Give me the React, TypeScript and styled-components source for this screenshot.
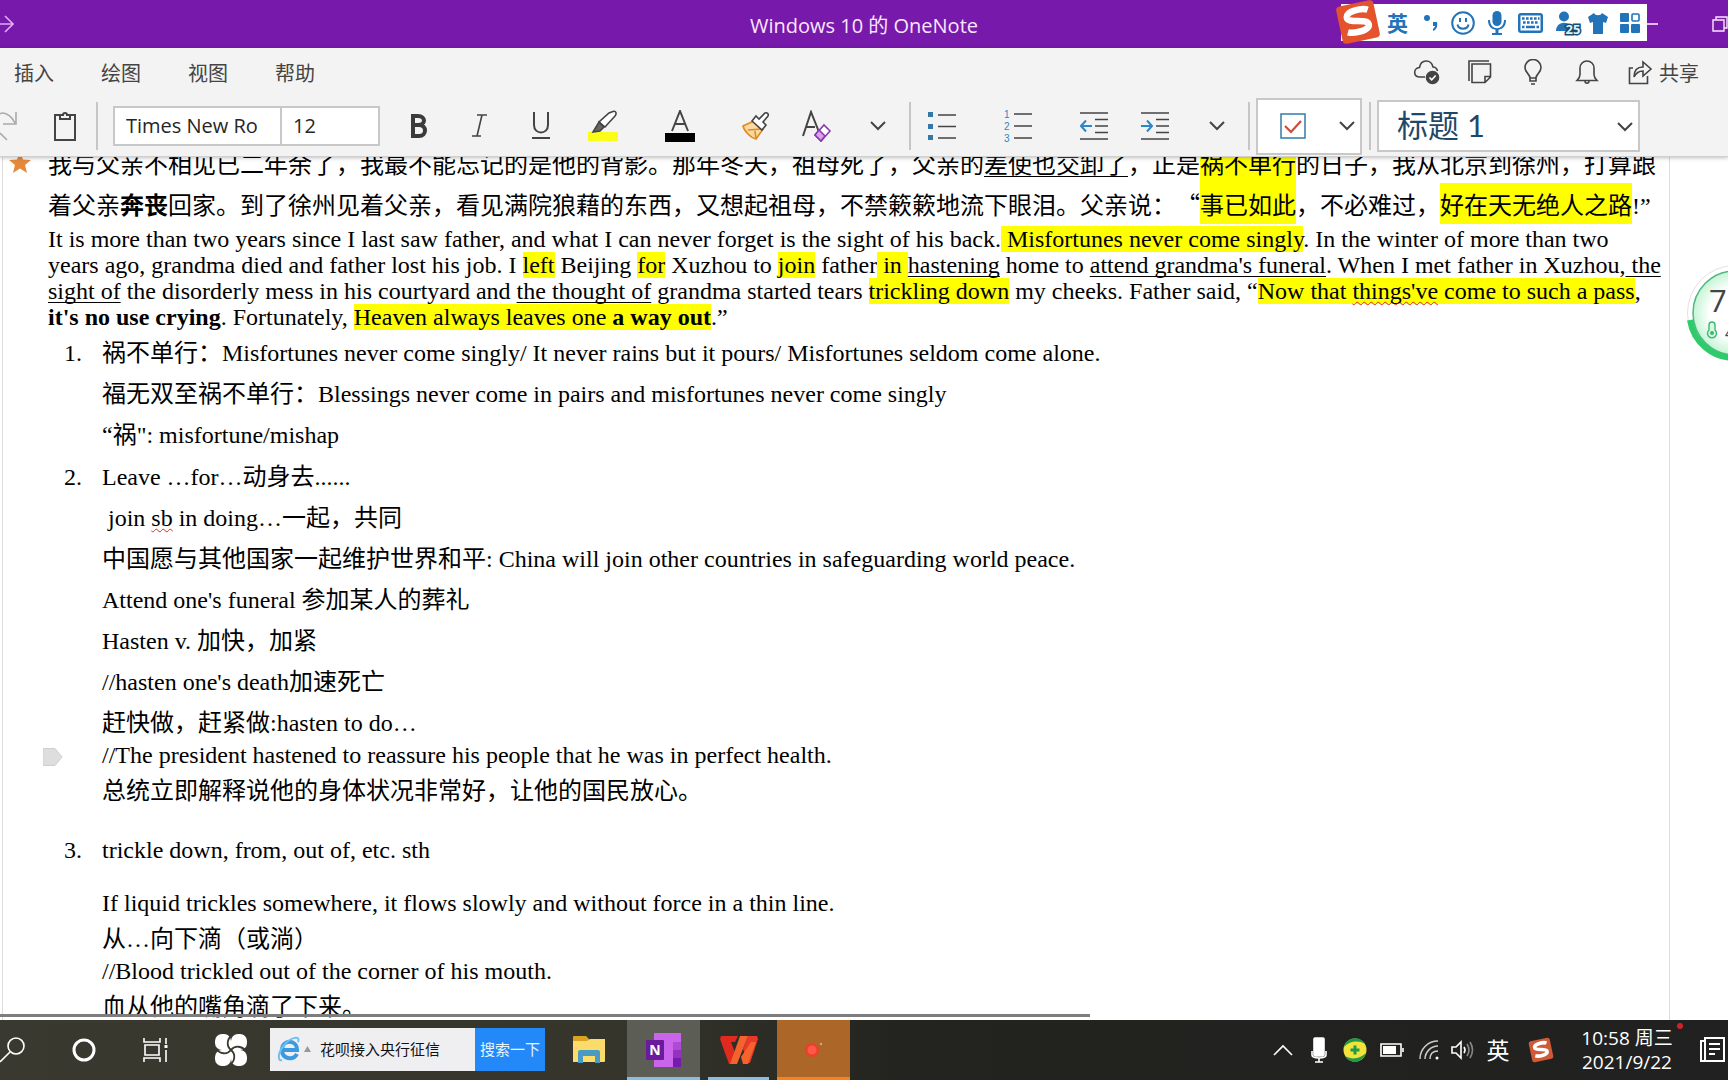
import React from 'react';
import styled, { createGlobalStyle, css } from 'styled-components';

const ui = '"Open Sans", "Noto Sans CJK SC", sans-serif';
const serif = '"Liberation Serif", "Noto Sans CJK SC", serif';
const cjk = '"Noto Sans CJK SC", sans-serif';

const Global = createGlobalStyle`
  * { box-sizing: border-box; }
  body { margin: 0; background: #fff; overflow: hidden; }
  button, input, select { font: inherit; color: inherit; margin: 0; }
  svg { display: block; flex: none; }
`;

const Screen = styled.div`
  display: flex;
  flex-direction: column;
  height: 100vh;
  font-family: ${ui};
  color: #444;
`;

/* ---------- title bar ---------- */
const TitleBar = styled.header`
  position: relative;
  flex: none;
  display: flex;
  align-items: center;
  height: 48px;
  background: #7719aa;
  color: #fbe6ff;
`;
const PlainButton = styled.button`
  display: inline-flex;
  align-items: center;
  justify-content: center;
  padding: 0;
  border: 0;
  background: none;
`;
const Forward = styled(PlainButton)`
  width: 14px;
  height: 48px;
`;
const Title = styled.h1`
  flex: 1;
  margin: 0 14px 0 0;
  text-align: center;
  font-size: 20px;
  font-weight: 400;
`;
const WindowButtons = styled.div`
  position: absolute;
  right: 0;
  top: 0;
  display: flex;
  justify-content: space-between;
  width: 81px;
  height: 48px;
`;
const ImeBar = styled.div`
  position: absolute;
  z-index: 2;
  right: 81px;
  top: 4px;
  display: flex;
  align-items: center;
  justify-content: space-between;
  width: 306px;
  height: 37px;
  padding: 0 7px 0 46px;
  background: #fff;
  color: #2373b9;
  font-size: 21px;
  font-weight: 700;
  line-height: 30px;
`;
const ImeLogo = styled.div`
  position: absolute;
  left: -6px;
  top: -5px;
`;
const Account = styled.svg`
  overflow: visible;
`;

/* ---------- menu row ---------- */
const Ribbon = styled.div`
  position: relative;
  z-index: 1;
  flex: none;
  background: #f3f3f3;
  border-bottom: 1px solid #d0d0d0;
  box-shadow: 0 1px 4px rgba(0, 0, 0, 0.25);
`;
const MenuRow = styled.nav`
  display: flex;
  align-items: center;
  justify-content: space-between;
  height: 48px;
  padding: 0 29px 0 14px;
  font-size: 20px;
`;
const Group = styled.div<{ $gap: number }>`
  display: flex;
  align-items: center;
  gap: ${p => p.$gap}px;
`;
const MenuButton = styled(PlainButton)`
  gap: 6px;
  white-space: nowrap;
`;

/* ---------- tool row ---------- */
const ToolRow = styled.div`
  display: flex;
  align-items: center;
  height: 60px;
`;
const Tool = styled(PlainButton)<{ $w: number }>`
  width: ${p => p.$w}px;
  height: 48px;
  flex: none;
`;
const Divider = styled.span`
  flex: none;
  width: 2px;
  height: 48px;
  background: #c6c6c6;
`;
const FontBox = styled.div`
  display: flex;
  flex: none;
  width: 267px;
  height: 40px;
  margin: 0 8px 0 15px;
  border: 2px solid #c8c8c8;
  background: #fff;
  color: #262626;
  font-size: 20px;
`;
const FontInput = styled.input<{ $w: number }>`
  width: ${p => p.$w}px;
  height: 36px;
  padding: 0 11px 2px;
  border: 0;
  outline: 0;
  background: none;
  & + & { border-left: 2px solid #c8c8c8; }
`;
const TagBox = styled.div`
  display: flex;
  align-items: center;
  justify-content: space-between;
  flex: none;
  width: 106px;
  height: 57px;
  margin: 0 7px 0 6px;
  padding: 0 4px 0 22px;
  border: 2px solid #c8c8c8;
  background: #fff;
`;
const StyleBox = styled.div`
  position: relative;
  flex: none;
  width: 263px;
  height: 52px;
  margin-left: 6px;
  border: 2px solid #c8c8c8;
  background: #fff;
  svg { position: absolute; right: 4px; top: 19px; pointer-events: none; }
`;
const StyleSelect = styled.select`
  appearance: none;
  width: 100%;
  height: 48px;
  padding: 0 18px 2px;
  border: 0;
  background: none;
  color: #1f4868;
  font-family: Lato, "Noto Sans CJK SC", sans-serif;
  font-size: 31px;
`;

/* ---------- page ---------- */
const Canvas = styled.main`
  position: relative;
  flex: 1;
  min-height: 0;
  overflow: hidden;
  background: #fff;
`;
const Sheet = styled.article`
  display: flow-root;
  height: 100%;
  margin: 0 58px 0 2px;
  border: solid #dcdcdc;
  border-width: 0 1px;
`;
const Body = styled.div`
  margin-top: -15px;
  padding-left: 45px;
  font-family: ${serif};
  font-size: 24px;
  color: #000;
  white-space: nowrap;
`;
const han = css`
  padding: 0;
  line-height: 41px;
`;
const latin = css`
  padding-bottom: 5px;
  line-height: 22px;
`;
const Chinese = styled.p`
  margin: 0;
  font-family: ${cjk};
  line-height: 41px;
  text-spacing-trim: space-all;
`;
const English = styled.p`
  margin: -1px 0 0;
  line-height: 26px;
`;
const Note = styled.p<{ $han?: boolean; $top?: number }>`
  margin: ${p => p.$top || 0}px 0 0;
  ${p => (p.$han ? han : latin)}
`;
const Serif = styled.span`
  font-family: ${serif};
`;
const Mark = styled.mark<{ $tall?: boolean }>`
  background: #ff0;
  color: inherit;
  padding: ${p => (p.$tall ? '3px 0' : '0')};
`;
const U = styled.u`
  text-underline-offset: 3px;
  text-decoration-thickness: 1px;
  text-decoration-skip-ink: none;
`;
const Typo = styled.span`
  text-decoration: underline wavy #d03010 1px;
  text-underline-offset: 2px;
  text-decoration-skip-ink: none;
`;
const Notes = styled.ol`
  margin: 0;
  padding: 0;
  list-style: none;
`;
const Item = styled.li<{ $top: number }>`
  display: grid;
  grid-template-columns: 54px 1fr;
  margin-top: ${p => p.$top}px;
`;
const Num = styled.span<{ $han?: boolean }>`
  margin-left: 16px;
  ${p => (p.$han ? han : latin)}
`;
const Flagged = styled.div`
  position: relative;
`;
const LineHandle = styled.span`
  position: absolute;
  left: -59px;
  top: 4px;
`;
const StarTag = styled.span`
  position: absolute;
  left: 9px;
  top: -5px;
`;
const ScrollThumb = styled.div`
  position: absolute;
  left: 0;
  bottom: 3px;
  width: 63.1%;
  height: 3px;
  background: #7d7d7d;
`;
const Ball = styled.aside`
  position: absolute;
  right: -55px;
  top: 108px;
  width: 96px;
  height: 96px;
`;

/* ---------- taskbar ---------- */
const TaskBar = styled.footer`
  flex: none;
  display: flex;
  justify-content: space-between;
  height: 60px;
  background: linear-gradient(90deg, #3a392f 0, #35352c 36%, #23241f 52%, #202120 100%);
  color: #fff;
`;
const Side = styled.div`
  display: flex;
  align-items: center;
`;
const Task = styled(PlainButton)<{ $w: number; $bg?: string; $line?: string }>`
  width: ${p => p.$w}px;
  height: 60px;
  flex: none;
  background: ${p => p.$bg || 'none'};
  border-bottom: 3px solid ${p => p.$line || 'transparent'};
  border-top: 3px solid transparent;
  background-clip: border-box;
`;
const OpenTask = styled(Task)`
  width: 61px;
  margin: 0 8px;
`;
const SearchForm = styled.form`
  display: flex;
  align-items: center;
  width: 275px;
  height: 43px;
  margin: 0 5px 2px 0;
  padding-left: 7px;
  background: #efeff1;
  font-size: 15px;
`;
const SearchInput = styled.input`
  flex: 1;
  min-width: 0;
  padding: 0 0 2px 7px;
  border: 0;
  background: none;
  color: #111;
`;
const SearchButton = styled.button`
  width: 70px;
  height: 43px;
  padding: 0 0 2px;
  border: 0;
  background: #2388f8;
  color: #e8f6ff;
`;
const ImeMode = styled(PlainButton)`
  width: 42px;
  padding: 0 4px 2px 0;
  font-size: 23px;
`;
const Clock = styled.time`
  position: relative;
  width: 136px;
  padding-right: 4px;
  text-align: center;
  font-size: 19px;
  line-height: 24px;
`;
const RedDot = styled.span`
  position: absolute;
  right: 14px;
  top: -3px;
  width: 6px;
  height: 6px;
  border-radius: 50%;
  background: #d0202c;
`;

const line = { fill: 'none', stroke: 'currentColor', strokeWidth: 1.6 };

const Chevron = () => (
  <svg width="18" height="12" viewBox="0 0 18 12" {...line} strokeWidth={2}><path d="M2 2l7 7 7-7" /></svg>
);
const SogouLogo = ({ size, tint }: { size: number; tint: string }) => (
  <svg width={size} height={size} viewBox="0 0 46 46">
    <g transform="rotate(-12 23 23)">
      <rect x="4" y="4" width="38" height="38" rx="4" fill={tint} />
      <path d="M35 13C30 10 14 10 13 16c-1 7 19 5 20 11 1 7-16 7-22 4" fill="none" stroke="#fff" strokeWidth="6.500" />
    </g>
  </svg>
);
const Indent = ({ out }: { out?: boolean }) => (
  <svg width="28" height="30" viewBox="0 0 28 30" {...line}>
    <path d="M0 2h28M15 8.500h13M15 15h13M15 21.500h13M0 28h28" />
    <path stroke="#2b88c8" strokeWidth="2" d={out ? 'M12 15H1M6 9.500L1 15l5 5.500' : 'M0 15h11M6 9.500l5 5.500-5 5.500'} />
  </svg>
);

export default function App() {
  return (
    <Screen>
      <Global />
      <TitleBar>
        <Forward aria-label="前进">
          <svg width="14" height="20" viewBox="0 0 14 20" fill="none" stroke="#e3a9f7" strokeWidth="1.6"><path d="M0 10h13M5 2l8 8-8 8" /></svg>
        </Forward>
        <Title>Windows 10 的 OneNote</Title>
        <ImeBar>
          <ImeLogo><SogouLogo size={46} tint="#e4532c" /></ImeLogo>
          <span>英</span>
          <svg width="20" height="22" viewBox="0 0 20 22" fill="currentColor"><circle cx="7" cy="6" r="3" /><path d="M13 10h4c1 5-1 8-4 9v-2c1-1 2-2 2-3h-2z" /></svg>
          <svg width="24" height="24" viewBox="0 0 24 24" fill="none" stroke="currentColor" strokeWidth="2"><circle cx="12" cy="12" r="10.800" /><path d="M6.500 13.500c1 5.500 10 5.500 11 0M9 7v4M15 7v4" /></svg>
          <svg width="20" height="26" viewBox="0 0 20 26" fill="currentColor"><rect x="5.500" y="1" width="9" height="15" rx="4.500" /><path d="M1 10h2c0 11 14 11 14 0h2c0 6-3 9-7.500 9.700V23H15v2H5v-2h3.500v-3.300C4 19 1 16 1 10z" /></svg>
          <svg width="25" height="20" viewBox="0 0 25 20"><rect width="25" height="20" rx="3" fill="currentColor" /><rect x="2.500" y="2.500" width="20" height="15" fill="#fff" /><path fill="none" stroke="currentColor" strokeWidth="2.400" strokeDasharray="2.600 1.400" d="M4 5.500h17.500M5 9.500h16" /><path fill="none" stroke="currentColor" strokeWidth="2.400" d="M4 14h2.500M8 14h9M18.500 14H21" /></svg>
          <Account width="22" height="24" viewBox="0 0 22 24">
            <circle cx="9" cy="5.500" r="5" fill="currentColor" /><path d="M1 20c0-11 16-11 17 0z" fill="currentColor" />
            <text x="18" y="23" fontSize="13" fontWeight="700" fill="#d8f4ff" stroke="#1a4a72" strokeWidth="3" paintOrder="stroke" textAnchor="middle">25</text>
          </Account>
          <svg width="20" height="22" viewBox="0 0 20 22" fill="currentColor"><path d="M6 1c1 3 7 3 8 0l6 4-2 6-3-1v12H5V10l-3 1-2-6z" /></svg>
          <svg width="20" height="20" viewBox="0 0 20 20" fill="currentColor"><rect width="9" height="9" rx="1" /><rect y="11" width="9" height="9" rx="1" /><rect x="11" y="11" width="9" height="9" rx="1" /><rect x="12" y="1" width="7" height="7" rx="1" fill="none" stroke="currentColor" strokeWidth="1.600" /></svg>
        </ImeBar>
        <WindowButtons>
          <PlainButton aria-label="最小化"><svg width="12" height="20" viewBox="0 0 12 20" {...line}><path d="M0 10h11" /></svg></PlainButton>
          <PlainButton aria-label="还原"><svg width="16" height="18" viewBox="0 0 16 18" {...line} strokeWidth={1.400}><path d="M1 5h11v11H1zM4 5V2h11v11h-3" /></svg></PlainButton>
        </WindowButtons>
      </TitleBar>

      <Ribbon>
        <MenuRow>
          <Group $gap={47}>
            <MenuButton>插入</MenuButton>
            <MenuButton>绘图</MenuButton>
            <MenuButton>视图</MenuButton>
            <MenuButton>帮助</MenuButton>
          </Group>
          <Group $gap={28}>
            <PlainButton aria-label="同步"><svg width="27" height="26" viewBox="0 0 27 26" {...line}><path d="M12 18H7c-7 0-7-9-.500-9.500C8 0 18 0 20 8c3 0 4 2 4.500 4" /><circle cx="19.500" cy="18.500" r="6" fill="#444" /><path stroke="#fff" d="M16.500 18.500l2.200 2.300 4-4.300" /></svg></PlainButton>
            <PlainButton aria-label="便笺"><svg width="24" height="24" viewBox="0 0 24 24" {...line}><path d="M1 21V1h20M4 4h18.500v13L17 22.500H4zM22.500 16.500H17v6" /></svg></PlainButton>
            <PlainButton aria-label="提示"><svg width="26" height="26" viewBox="0 0 26 26" {...line}><path d="M10 19c0-4-5-5-5-10.500a8 8 0 0 1 16 0C21 14 16 15 16 19zM10 19v3h6v-3M11 25h4" /></svg></PlainButton>
            <PlainButton aria-label="通知"><svg width="26" height="26" viewBox="0 0 26 26" {...line}><path d="M3 21.500c2-2 3-3 3-6V9a7 7 0 0 1 14 0v6.500c0 3 1 4 3 6zM11 22c0 3 4 3 4 0" /></svg></PlainButton>
            <MenuButton><svg width="25" height="26" viewBox="0 0 25 26" {...line}><path d="M5 9H1.500v15.500h18V17M6 18C6 11 9 8 15 8V3l8 7-8 7v-5c-4 0-7 2-9 6z" /></svg>共享</MenuButton>
          </Group>
        </MenuRow>
        <ToolRow>
          <Tool $w={34} aria-label="重做"><svg width="34" height="34" viewBox="0 0 34 34" fill="none" stroke="#aaa" strokeWidth="1.600"><path d="M16 3v12H3M15 14C10 4 2 3 0 5M0 24l7 7" /></svg></Tool>
          <Tool $w={62} aria-label="粘贴"><svg width="24" height="30" viewBox="0 0 24 30" {...line} strokeWidth={2}><path d="M7 4H2v25h20V4h-5M7 4v4h10V4h-3a2 2 0 0 0-4 0z" /></svg></Tool>
          <Divider />
          <FontBox>
            <FontInput $w={165} aria-label="字体" defaultValue="Times New Ro" />
            <FontInput $w={98} aria-label="字号" defaultValue="12" />
          </FontBox>
          <Tool $w={62} aria-label="加粗"><svg width="18" height="24" viewBox="0 0 18 24" fill="none" stroke="#3b3b3b" strokeWidth="4"><path d="M3 2h5c8 0 8 9 0 9H3h6c8 0 8 11 0 11H3zV22" /></svg></Tool>
          <Tool $w={60} aria-label="倾斜"><svg width="16" height="24" viewBox="0 0 16 24" {...line}><path d="M5 1h10M0 22h9M10 1L5 22" /></svg></Tool>
          <Tool $w={62} aria-label="下划线"><svg width="20" height="28" viewBox="0 0 20 28" {...line} strokeWidth={2}><path d="M3 0v13c0 10 14 10 14 0V0M1 26h18" /></svg></Tool>
          <Tool $w={62} aria-label="突出显示">
            <svg width="32" height="32" viewBox="0 0 32 32" {...line}><rect x="1" y="22" width="30" height="9" fill="#fcfc19" stroke="none" /><path d="M26 1.500c3-1 4 2 2 4.500L18 17l-6-5L22 3z" fill="#fff" /><path d="M12 12l5 5-4 4-7 1z" fill="#666" /></svg>
          </Tool>
          <Tool $w={91} aria-label="字体颜色">
            <svg width="30" height="32" viewBox="0 0 30 32" {...line} strokeWidth={2}><rect y="23" width="30" height="9" fill="#000" stroke="none" /><path d="M7 21L15 1l8 20M10 14h10" /></svg>
          </Tool>
          <Tool $w={62} aria-label="格式刷">
            <svg width="28" height="30" viewBox="0 0 28 30" {...line}><path d="M1 15l11-5 9 8-7 10C9 27 2 20 1 15z" fill="#fbd9a0" stroke="#e08a20" /><path d="M6 19l14-1M14 28l-1-8" stroke="#e08a20" /><path d="M10 10l4-5 3 3 6-6c2-1 4 1 3 3l-5 6 3 3-4 5z" fill="#fff" /></svg>
          </Tool>
          <Tool $w={60} aria-label="清除格式">
            <svg width="30" height="32" viewBox="0 0 30 32" {...line}><path d="M1 26L9 2l8 20M4 17h9" strokeWidth="2" /><path d="M13 25l9-10 6 6-9 10z" fill="#fff" stroke="#8a3aac" /><path d="M13 25l4-5 6 6-4 5z" fill="#dca0ee" stroke="#8a3aac" /></svg>
          </Tool>
          <Tool $w={62} aria-label="更多字体选项"><Chevron /></Tool>
          <Divider />
          <Tool $w={61} aria-label="项目符号">
            <svg width="28" height="30" viewBox="0 0 28 30" {...line}><path d="M10 4h18M10 15.500h18M10 27h18" /><path fill="#3478a8" stroke="none" d="M0 1h5v5H0zM0 13h5v5H0zM0 24h5v5H0z" /></svg>
          </Tool>
          <Tool $w={92} aria-label="编号">
            <svg width="28" height="36" viewBox="0 0 28 36" {...line}><path d="M10 6h18M10 18h18M10 30h18" /><g fill="#2b88c8" stroke="none" fontSize="10" fontFamily="Liberation Sans, sans-serif"><text x="0" y="10">1</text><text x="0" y="22">2</text><text x="0" y="34">3</text></g></svg>
          </Tool>
          <Tool $w={60} aria-label="减少缩进"><Indent out /></Tool>
          <Tool $w={62} aria-label="增加缩进"><Indent /></Tool>
          <Tool $w={62} aria-label="更多段落选项"><Chevron /></Tool>
          <Divider />
          <TagBox>
            <PlainButton aria-label="待办事项标记"><svg width="26" height="26" viewBox="0 0 26 26" {...line}><rect x="1" y="1" width="24" height="24" stroke="#3d84ac" /><path stroke="#d04a3c" strokeWidth="2.200" d="M5 13l6 6L21 8" /></svg></PlainButton>
            <PlainButton aria-label="更多标记"><Chevron /></PlainButton>
          </TagBox>
          <Divider />
          <StyleBox>
            <StyleSelect aria-label="样式" defaultValue="h1"><option value="h1">标题 1</option></StyleSelect>
            <Chevron />
          </StyleBox>
        </ToolRow>
      </Ribbon>

      <Canvas>
        <Sheet>
          <Body>
            <Chinese>
              我与父亲不相见已二年余了，我最不能忘记的是他的背影。那年冬天，祖母死了，父亲的<U>差使也交卸了</U>，正是<Mark $tall>祸不单行</Mark>的日子，我从北京到徐州，打算跟<br />
              着父亲<b>奔丧</b>回家。到了徐州见着父亲，看见满院狼藉的东西，又想起祖母，不禁簌簌地流下眼泪。父亲说：“<Mark $tall>事已如此</Mark>，不必难过，<Mark $tall>好在天无绝人之路</Mark><Serif>!”</Serif>
            </Chinese>
            <English>
              It is more than two years since I last saw father, and what I can never forget is the sight of his back.<Mark> Misfortunes never come singly</Mark>. In the winter of more than two<br />
              years ago, grandma died and father lost his job. I <Mark>left</Mark> Beijing <Mark>for</Mark> Xuzhou to <Mark>join</Mark> father<Mark> in </Mark><U>hastening</U> home to <U>attend grandma's funeral</U>. When I met father in Xuzhou,<U> the</U><br />
              <U>sight of</U> the disorderly mess in his courtyard and <U>the thought of</U> grandma started tears <Mark>trickling down</Mark> my cheeks. Father said, “<Mark>Now that <Typo>things've</Typo> come to such a pass</Mark>,<br />
              <b>it's no use crying</b>. Fortunately, <Mark>Heaven always leaves one <b>a way out</b></Mark>.”
            </English>
            <Notes>
              <Item $top={3}>
                <Num $han>1.</Num>
                <div>
                  <Note $han>祸不单行：Misfortunes never come singly/ It never rains but it pours/ Misfortunes seldom come alone.</Note>
                  <Note $han>福无双至祸不单行：Blessings never come in pairs and misfortunes never come singly</Note>
                  <Note $han>“祸": misfortune/mishap</Note>
                </div>
              </Item>
              <Item $top={1}>
                <Num $han>2.</Num>
                <div>
                  <Note $han>Leave …for…动身去......</Note>
                  <Note $han>&nbsp;join <Typo>sb</Typo> in doing…一起，共同</Note>
                  <Note $han>中国愿与其他国家一起维护世界和平: China will join other countries in safeguarding world peace.</Note>
                  <Note $han>Attend one's funeral 参加某人的葬礼</Note>
                  <Note $han>Hasten v. 加快，加紧</Note>
                  <Note $han>//hasten one's death加速死亡</Note>
                  <Note $han>赶快做，赶紧做:hasten to do…</Note>
                  <Flagged>
                    <LineHandle><svg width="20" height="18" viewBox="0 0 20 18"><path d="M0 .500h12l7 8.500-7 8.500H0z" fill="#dedede" stroke="#cfcfcf" /></svg></LineHandle>
                    <Note>//The president hastened to reassure his people that he was in perfect health.</Note>
                  </Flagged>
                  <Note $han>总统立即解释说他的身体状况非常好，让他的国民放心。</Note>
                </div>
              </Item>
              <Item $top={27}>
                <Num>3.</Num>
                <div>
                  <Note>trickle down, from, out of, etc. sth</Note>
                  <Note $top={26}>If liquid trickles somewhere, it flows slowly and without force in a thin line.</Note>
                  <Note $han>从…向下滴（或淌）</Note>
                  <Note>//Blood trickled out of the corner of his mouth.</Note>
                  <Note $han>血从他的嘴角滴了下来。</Note>
                </div>
              </Item>
            </Notes>
          </Body>
        </Sheet>
        <StarTag><svg width="22" height="21" viewBox="0 0 22 21"><path fill="#e5883a" d="M11 0l3 7.500 8 .500-6 5 2 8-7-4.500L4 21l2-8-6-5 8-.500z" /></svg></StarTag>
        <ScrollThumb />
        <Ball>
          <svg width="96" height="96" viewBox="0 0 96 96">
            <defs><radialGradient id="glow"><stop offset="60%" stopColor="#fff" /><stop offset="100%" stopColor="#c4f5d4" /></radialGradient></defs>
            <circle cx="48" cy="48" r="47.500" fill="#fff" stroke="#e6dfe6" />
            <circle cx="48" cy="48" r="42" fill="url(#glow)" stroke="#52b584" strokeWidth="1.500" />
            <path d="M3 55a45 45 0 0 0 45 38" fill="none" stroke="#2ecb6b" strokeWidth="6" />
            <text x="22" y="47" fontSize="31" fill="#444">7</text>
            <path d="M22 60a3 3 0 0 1 6 0v5a4.500 4.500 0 1 1-6 0z" fill="#d8f8e2" stroke="#39b873" strokeWidth="1.400" />
            <circle cx="25" cy="68" r="2" fill="#39b873" />
            <text x="38" y="74" fontSize="16" fill="#444">4</text>
          </svg>
        </Ball>
      </Canvas>

      <TaskBar>
        <Side>
          <Task $w={49} aria-label="搜索"><svg width="49" height="28" viewBox="0 0 49 28" {...line}><circle cx="16" cy="10" r="8" /><path d="M10 16L0 26" /></svg></Task>
          <Task $w={70} aria-label="Cortana"><svg width="26" height="26" viewBox="0 0 26 26" fill="none" stroke="#fff" strokeWidth="3"><circle cx="13" cy="13" r="10" /></svg></Task>
          <Task $w={73} aria-label="任务视图"><svg width="26" height="26" viewBox="0 0 26 26" {...line}><path d="M1 1v4h16V1M1 25v-4h16v4M2 8h14v10H2zM23 1v6M23 13v12" /><path strokeWidth="3" d="M23 8v3" /></svg></Task>
          <Task $w={78} aria-label="浏览器">
            <svg width="34" height="34" viewBox="0 0 34 34">
              <g fill="#fff"><rect x="1" y="1" width="16" height="16" rx="7" /><rect x="17" y="1" width="16" height="16" rx="7" /><rect x="1" y="17" width="16" height="16" rx="7" /><rect x="17" y="17" width="16" height="16" rx="7" /><circle cx="17" cy="17" r="9" /></g>
              <g fill="none" stroke="#3a392f" strokeWidth="1.800">
                <path d="M18 2c-5 4-6 11-1 15" />
                <path d="M18 2c-5 4-6 11-1 15" transform="rotate(90 17 17)" />
                <path d="M18 2c-5 4-6 11-1 15" transform="rotate(180 17 17)" />
                <path d="M18 2c-5 4-6 11-1 15" transform="rotate(270 17 17)" />
              </g>
            </svg>
          </Task>
          <SearchForm>
            <svg width="24" height="26" viewBox="0 0 24 26" fill="none"><path d="M20 18c-4 7-15 5-15-4 0-11 15-11 15 0H7" stroke="#3a9ae0" strokeWidth="4" /><path d="M21 6C24-1 14 1 7 9 1 16 0 26 5 24" stroke="#6fbff0" strokeWidth="2" /></svg>
            <svg width="12" height="8" viewBox="0 0 12 8"><path d="M3 7l3.500-6L10 7z" fill="#999" /></svg>
            <SearchInput aria-label="搜索内容" defaultValue="花呗接入央行征信" />
            <SearchButton type="button">搜索一下</SearchButton>
          </SearchForm>
          <Task $w={77} aria-label="文件资源管理器">
            <svg width="34" height="30" viewBox="0 0 34 30"><path d="M1 2q0-1 1-1h12l3 3v5H1z" fill="#d9a520" /><path d="M1 6h14l3-2h15v22q0 1-1 1H1z" fill="#fbdb6b" /><path d="M6 28V17q0-2 2-2h18q2 0 2 2v11h-5v-7H11v7z" fill="#4a9bc4" /></svg>
          </Task>
          <Task $w={73} $bg="#5c5d55" $line="#8cbce0" aria-label="OneNote">
            <svg width="36" height="36" viewBox="0 0 36 36"><rect x="8" y="1" width="27" height="34" fill="#ca64ea" /><path fill="#ae4bd5" d="M27 10h8v8h-8z" /><path fill="#9332bf" d="M27 18h8v8h-8z" /><path fill="#7719aa" d="M27 26h8v9h-8z" /><rect x="0" y="8" width="18" height="20" rx="1" fill="#6b1a9c" /><text x="9" y="23" fontSize="14" fontWeight="700" fill="#fff" textAnchor="middle">N</text></svg>
          </Task>
          <OpenTask $w={61} $line="#8cbce0" aria-label="WPS Office">
            <svg width="38" height="30" viewBox="0 0 38 30"><path fill="#e02a1e" d="M1 1h17l-3 6h-4l5 13-4 9H9L0 4z" /><path fill="#e8382a" d="M37 1H28l-5 13 5 14h2L38 4z" /><path fill="#f4632e" d="M20 1h8L17 29h-7zM31 7h5l-8 22h-5l-2-7z" /></svg>
          </OpenTask>
          <Task $w={73} $bg="#ab6628" $line="#f5821f" aria-label="录制">
            <svg width="26" height="24" viewBox="0 0 26 24"><circle cx="11" cy="12" r="7" fill="#e8412e" /><circle cx="11" cy="12" r="4.500" fill="#ff5848" /><circle cx="20" cy="6" r="1.200" fill="#e8a080" /></svg>
          </Task>
        </Side>
        <Side>
          <Task $w={36} aria-label="显示隐藏的图标"><svg width="20" height="12" viewBox="0 0 20 12" {...line}><path d="M1 11l9-9 9 9" /></svg></Task>
          <Task $w={35} aria-label="麦克风"><svg width="16" height="26" viewBox="0 0 16 26" {...line}><rect x="3" y="1" width="10" height="18" rx="1" fill="#fff" /><path d="M1 14v4c0 4 14 4 14 0v-4M8 21v4M4 25h8" /></svg></Task>
          <Task $w={37} aria-label="安全卫士"><svg width="24" height="24" viewBox="0 0 24 24"><circle cx="12" cy="12" r="11.500" fill="#f2e23a" /><path d="M1 9C4-2 18-2 22 6c-7-4-15-3-21 3zM23 15C20 26 6 26 2 18c7 4 15 3 21-3z" fill="#1f9a48" /><path d="M10.500 7.500h3v3h3v3h-3v3h-3v-3h-3v-3h3z" fill="#1f9a48" /></svg></Task>
          <Task $w={38} aria-label="电池"><svg width="24" height="16" viewBox="0 0 24 16" {...line}><path d="M1 2h20v12H1zM23 6v4" /><path d="M3 4h13v8H3z" fill="#fff" stroke="none" /></svg></Task>
          <Task $w={36} aria-label="网络"><svg width="20" height="20" viewBox="0 0 20 20" fill="none" stroke="#ccc" strokeWidth="1.500"><path d="M1 19C1 9 9 1 19 1M6 19C6 12 12 6 19 6M11 19c0-5 3-8 8-8" /><circle cx="18" cy="18" r="1.500" fill="#fff" stroke="none" /></svg></Task>
          <Task $w={32} aria-label="音量"><svg width="24" height="20" viewBox="0 0 24 20" {...line}><path d="M1 7h4l5-5v16l-5-5H1z" /><path d="M13 7q2 3 0 6" /><path stroke="#888" d="M16 4q4 6 0 12M19 2q5 8 0 16" /></svg></Task>
          <ImeMode aria-label="输入法">英</ImeMode>
          <Task $w={40} aria-label="搜狗输入法"><SogouLogo size={26} tint="#cf5a38" /></Task>
          <Clock>10:58 周三<br />2021/9/22<RedDot /></Clock>
          <Task $w={31} aria-label="操作中心"><svg width="25" height="26" viewBox="0 0 25 26" {...line} strokeWidth={2}><path d="M5 1h19v23H1V4h4zM5 4v20M9 7h11M9 12h11M9 17h6" /></svg></Task>
        </Side>
      </TaskBar>
    </Screen>
  );
}
